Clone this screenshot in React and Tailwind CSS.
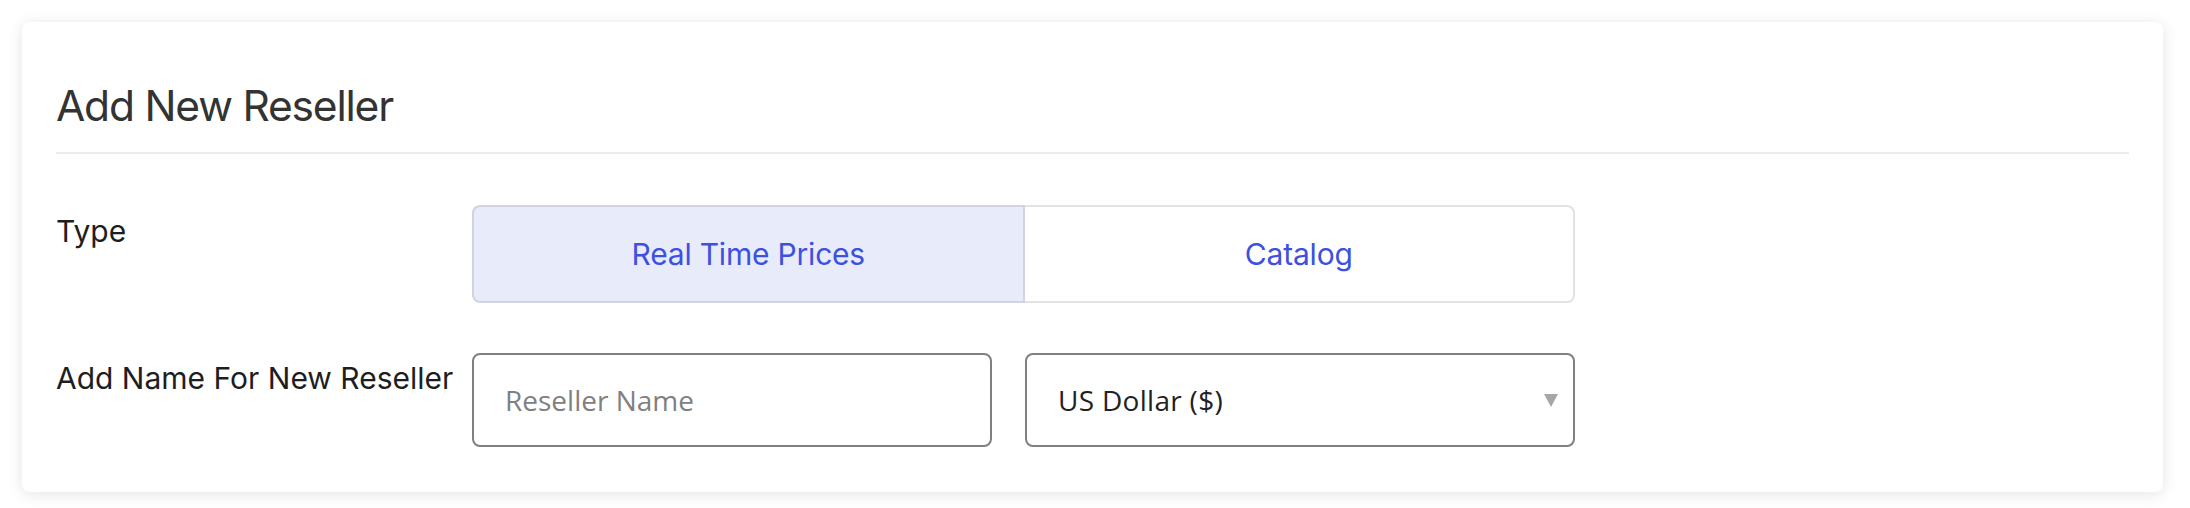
import React from "react";

export default function App() {
  return (
    <div className="min-h-screen bg-white pt-[22px] pl-[22px] pr-[27px] font-['Inter',sans-serif]">
      <div className="rounded-[8px] bg-white shadow-[0_2px_16px_rgba(0,0,0,0.11)] px-[34px] pt-[58px] pb-[45px]">
        <h1 className="text-[42.5px] leading-[52px] font-normal text-[#333333] tracking-[-1.2px] mb-[20px]">
          Add New Reseller
        </h1>
        <div className="h-[2px] bg-[#ececec]" />

        <div className="flex mt-[51px]">
          <div className="w-[416px] pt-[8px] text-[30px] leading-[36px] text-[#1e1e1e]">Type</div>
          <div className="w-[1103px] h-[98px] flex">
            <button className="flex-1 flex items-center justify-center bg-[#e8ebfa] border-2 border-[#d0d3e2] rounded-l-[8px] text-[30px] leading-[36px] text-[#3d50e0] tracking-[-0.2px]">
              Real Time Prices
            </button>
            <button className="flex-1 flex items-center justify-center bg-white border-2 border-l-0 border-[#e2e2e2] rounded-r-[8px] text-[30px] leading-[36px] text-[#3d50e0] tracking-[-0.2px]">
              Catalog
            </button>
          </div>
        </div>

        <div className="flex mt-[50px]">
          <div className="w-[416px] pt-[7px] text-[30px] leading-[36px] text-[#1e1e1e]">
            Add Name For New Reseller
          </div>
          <div className="flex gap-[33px]">
            <input
              type="text"
              placeholder="Reseller Name"
              className="w-[520px] h-[94px] border-2 border-[#808080] rounded-[8px] pl-[31px] pr-4 text-[28px] font-['Open_Sans',sans-serif] text-[#222222] placeholder:text-[#808080] outline-none bg-white"
            />
            <div className="w-[550px] h-[94px] border-2 border-[#808080] rounded-[8px] pl-[31px] pr-[15px] flex items-center justify-between bg-white">
              <span className="text-[28px] tracking-[0.3px] font-['Open_Sans',sans-serif] text-[#222222]">US Dollar ($)</span>
              <svg width="14" height="13" viewBox="0 0 14 13" className="block">
                <polygon points="0,0 14,0 7,13" fill="#a6a6a6" />
              </svg>
            </div>
          </div>
        </div>
      </div>
    </div>
  );
}
